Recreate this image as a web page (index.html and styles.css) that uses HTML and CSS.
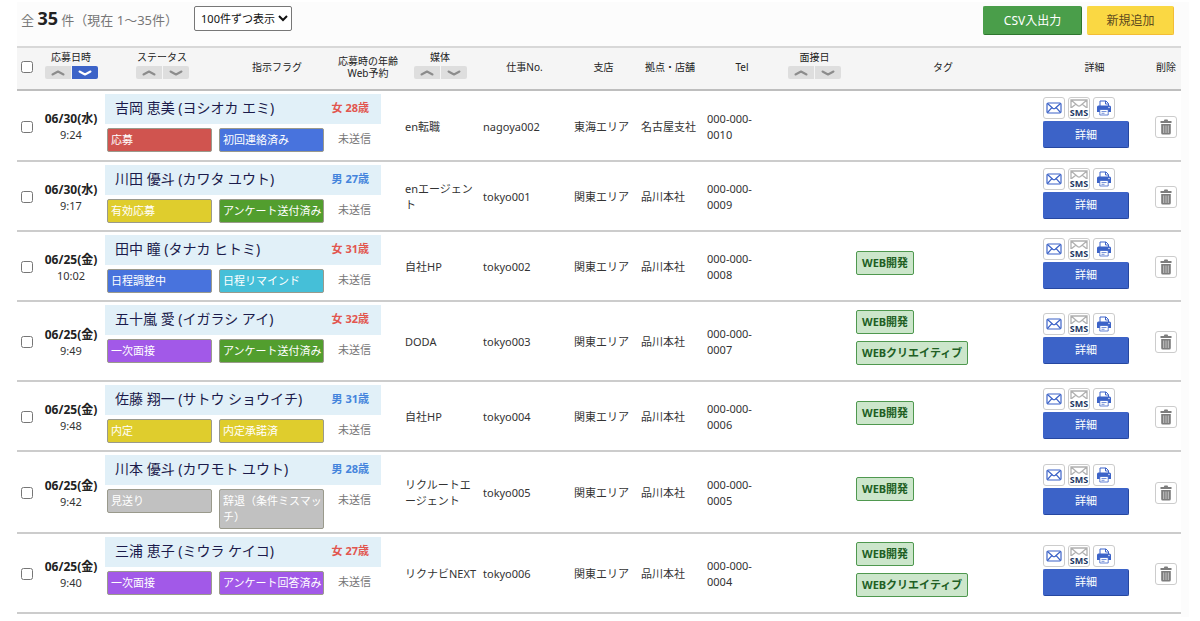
FILE: index.html
```html
<!DOCTYPE html>
<html lang="ja">
<head>
<meta charset="utf-8">
<title>応募者一覧</title>
<link rel="stylesheet" href="styles.css">
</head>
<body>
<svg class="sprite" aria-hidden="true">
  <symbol id="i-up" viewBox="0 0 14 8"><path d="M1.5 5.5 7 2.5l5.500 3" fill="none" stroke="currentColor" stroke-width="2" stroke-linecap="round" stroke-linejoin="round"/></symbol>
  <symbol id="i-down" viewBox="0 0 14 8"><path d="M1.500 2.500 7 5.500l5.500-3" fill="none" stroke="currentColor" stroke-width="2" stroke-linecap="round" stroke-linejoin="round"/></symbol>
  <symbol id="i-mail" viewBox="0 0 16 12"><g fill="none" stroke="currentColor" stroke-width="1.2" stroke-linejoin="round"><rect x="1" y="1" width="14" height="10" rx="1.200"/><path d="m1.500 1.500 5.300 4.800q1.200.9 2.400 0l5.300-4.800M1.500 10.500l4.300-4.800M14.500 10.500l-4.300-4.800"/></g></symbol>
  <symbol id="i-env" viewBox="0 0 18 9"><g fill="none" stroke="#b0b0b0" stroke-width="1.300"><path d="M1 9V1h16v8M1 1l6.500 5.500q1.500 1.200 3 0L17 1M1 9l5-4M17 9l-5-4"/></g></symbol>
  <symbol id="i-print" viewBox="0 0 16 16"><path d="M4 6V1h6l2.500 2.500V6" fill="#fff" stroke="currentColor" stroke-width="1"/><path d="M9.500 1v3h3" fill="none" stroke="currentColor"/><path d="M2.500 5.500h11a1.500 1.500 0 0 1 1.500 1.500v5H1V7a1.500 1.500 0 0 1 1.500-1.500Z" fill="currentColor"/><circle cx="13" cy="7.500" r=".7" fill="#fff"/><path d="M3.800 9.500h8.400V15H3.800Z" fill="#fff" stroke="currentColor" stroke-width=".8"/><path d="M5.500 11.500h5M5.500 13.300h3" stroke="currentColor" stroke-width=".7"/></symbol>
  <symbol id="i-trash" viewBox="0 0 12 16"><path d="M.5 2h3.300l.7-1.500h3L8.200 2h3.300v2H.5ZM1.200 5h9.600v9a1.500 1.500 0 0 1-1.500 1.500H2.700A1.500 1.500 0 0 1 1.200 14Z" fill="#7d7d7d"/><path d="M3.700 6.500V14M6 6.500V14M8.300 6.500V14" stroke="#c6c6c6" stroke-width="1"/></symbol>
</svg>
<main class="panel">
  <header class="toolbar">
    <p class="count">全 <strong>35</strong> 件（現在 1〜35件）</p>
    <select class="per-page" aria-label="表示件数"><option>100件ずつ表示</option></select>
    <div class="toolbar-actions">
      <button type="button" class="btn btn-csv">CSV入出力</button>
      <button type="button" class="btn btn-new">新規追加</button>
    </div>
  </header>
  <table class="list">
    <colgroup>
      <col class="c-check"><col class="c-date"><col class="c-status"><col class="c-flag"><col class="c-web"><col class="c-media"><col class="c-job"><col class="c-branch"><col class="c-store"><col class="c-tel"><col class="c-meet"><col class="c-tag"><col class="c-detail"><col class="c-del">
    </colgroup>
    <thead>
      <tr>
        <th class="check"><input type="checkbox" aria-label="すべて選択"></th>
        <th>応募日時<span class="sort"><button type="button" aria-label="昇順"><svg><use href="#i-up"/></svg></button><button type="button" class="on" aria-label="降順"><svg><use href="#i-down"/></svg></button></span></th>
        <th>ステータス<span class="sort"><button type="button" aria-label="昇順"><svg><use href="#i-up"/></svg></button><button type="button" aria-label="降順"><svg><use href="#i-down"/></svg></button></span></th>
        <th>指示フラグ</th>
        <th>応募時の年齢<br>Web予約</th>
        <th>媒体<span class="sort"><button type="button" aria-label="昇順"><svg><use href="#i-up"/></svg></button><button type="button" aria-label="降順"><svg><use href="#i-down"/></svg></button></span></th>
        <th>仕事No.</th>
        <th>支店</th>
        <th>拠点・店舗</th>
        <th>Tel</th>
        <th>面接日<span class="sort"><button type="button" aria-label="昇順"><svg><use href="#i-up"/></svg></button><button type="button" aria-label="降順"><svg><use href="#i-down"/></svg></button></span></th>
        <th>タグ</th>
        <th>詳細</th>
        <th>削除</th>
      </tr>
    </thead>
    <tbody id="rows"></tbody>
  </table>
</main>
<script src="script.js"></script>
</body>
</html>
```

FILE: styles.css
```css
* { box-sizing: border-box; }

body {
  margin: 0;
  padding: 2px 11px 4px 17px;
  height: 100vh;
  background: #fff;
  color: #333;
  font: 11px/16px "Noto Sans", "Noto Sans CJK JP", sans-serif;
}

button, select, input { font: inherit; margin: 0; }
button { padding: 0; cursor: pointer; }
svg { display: block; }
.sprite { display: none; }

.panel {
  height: 100%;
  padding-right: 8px;
  overflow: hidden;
  background: #fcfcfc;
}

.toolbar {
  display: flex;
  align-items: flex-start;
  gap: 16px;
  height: 44px;
  padding: 4px 7px 0 4px;
}
.count { margin: 0; color: #777; font-size: 13px; line-height: 24px; white-space: nowrap; }
.count strong { color: #222; font-size: 18px; }
.per-page {
  width: 98px;
  height: 25px;
  padding: 0 0 0 2px;
  border: 1px solid #777;
  border-radius: 2px;
  background: #fff;
  color: #111;
}
.toolbar-actions { display: flex; gap: 5px; margin-left: auto; }
.btn { height: 29px; border: 1px solid; border-radius: 2px; font-size: 12px; }
.btn-csv {
  width: 99px;
  background: #4a9e4a;
  border-color: #4a9e4a #2e762e #2e762e #4a9e4a;
  color: #fff;
}
.btn-new {
  width: 87px;
  background: #fad843;
  border-color: #fad843 #f3bd35 #f3bd35 #fad843;
  color: #5c4a1e;
}

.list { width: 100%; table-layout: fixed; border-collapse: separate; border-spacing: 0; }
.c-check { width: 20px; }
.c-date { width: 68px; }
.c-status { width: 114px; }
.c-flag { width: 116px; }
.c-web { width: 66px; }
.c-media { width: 78px; }
.c-job { width: 91px; }
.c-branch { width: 67px; }
.c-store { width: 66px; }
.c-tel { width: 78px; }
.c-meet { width: 67px; }
.c-detail { width: 113px; }
.c-del { width: 30px; }

th {
  height: 45px;
  padding: 0 0 3px;
  border-top: 2px solid #d8d8d8;
  border-bottom: 2px solid #bebebe;
  background: #f5f5f5;
  color: #222;
  font-size: 10px;
  font-weight: 400;
  line-height: 12px;
  white-space: nowrap;
}
.sort { display: flex; justify-content: center; gap: 1px; margin: 3px 0 4px; }
.sort button {
  display: grid;
  place-items: center;
  width: 26px;
  height: 13px;
  border: 0;
  border-radius: 2px 0 0 2px;
  background: #dedede;
  color: #8c8c8c;
}
.sort button + button { border-radius: 0 2px 2px 0; }
.sort .on { background: #3c63c8; color: #fff; }
.sort svg { width: 14px; height: 8px; }

td {
  height: 70px;
  padding: 2px 0 0 4px;
  border-bottom: 2px solid #ccc;
  background: #fff;
  vertical-align: middle;
}
tbody tr:first-child td { height: 71px; }
.check { padding-left: 4px; text-align: left; }
.check input { display: block; width: 12px; height: 12px; }
.date { padding: 3px 0 0; text-align: center; }
.date strong { display: block; color: #222; font-size: 12px; }
.tel { padding-right: 20px; }

.person { padding: 3px 20px 3px 0; vertical-align: top; }
.band {
  display: flex;
  align-items: center;
  justify-content: space-between;
  height: 30px;
  margin-bottom: 4px;
  padding: 0 12px 2px 10px;
  background: #e1f0f8;
}
.name { color: #1b1b4b; font-size: 14px; text-decoration: none; white-space: nowrap; }
.female { color: #e2564f; }
.male { color: #4484dc; }
.marks {
  display: grid;
  grid-template-columns: 105px 105px 1fr;
  align-items: start;
  column-gap: 7px;
  padding-left: 2px;
  color: #777;
}
.mark { padding: 3px 0 3px 3px; border: 1px solid #9a9a8c; border-radius: 2px; color: #fff; }
.red { background: #d0544f; }
.blue { background: #4873dd; }
.yellow { background: #dfcd2d; }
.green { background: #529e2e; }
.cyan { background: #45bfd8; }
.purple { background: #a259e8; }
.gray { background: #c1c1c1; }
.web { padding: 3px 0 0 7px; }

.tags { padding: 8px 0 8px 8px; }
.tag {
  display: block;
  width: fit-content;
  margin-bottom: 7px;
  padding: 3px 5px;
  border: 1px solid #4f984f;
  border-radius: 2px;
  background: #cce6cb;
  color: #215f24;
  font-weight: 700;
}

.detail { padding: 0 0 6px 5px; }
.icons { display: flex; gap: 3px; margin-bottom: 2px; }
.icon {
  display: grid;
  place-items: center;
  width: 22px;
  height: 22px;
  border: 1px solid #ccc;
  border-radius: 3px;
  background: #fff;
  color: #3c63c8;
}
.i-mail { width: 16px; height: 12px; }
.i-print { width: 16px; height: 16px; }
.i-trash { width: 12px; height: 16px; }
.i-env { width: 18px; height: 9px; }
.sms { align-content: center; color: #1f3864; font-size: 9px; line-height: 9px; font-weight: 700; }
.btn-detail {
  width: 86px;
  height: 27px;
  border: 1px solid #3c63c8;
  border-color: #3c63c8 #2647a0 #2647a0 #3c63c8;
  border-radius: 2px;
  background: #3c63c8;
  color: #fff;
}
```

FILE: script.js
```js
const rows = [
  ["06/30(水)", "9:24", "吉岡 恵美 (ヨシオカ エミ)", "女", 28, "red", "応募", "blue", "初回連絡済み", "en転職", "nagoya002", "東海エリア", "名古屋支社", "0010", []],
  ["06/30(水)", "9:17", "川田 優斗 (カワタ ユウト)", "男", 27, "yellow", "有効応募", "green", "アンケート送付済み", "enエージェント", "tokyo001", "関東エリア", "品川本社", "0009", []],
  ["06/25(金)", "10:02", "田中 瞳 (タナカ ヒトミ)", "女", 31, "blue", "日程調整中", "cyan", "日程リマインド", "自社HP", "tokyo002", "関東エリア", "品川本社", "0008", ["WEB開発"]],
  ["06/25(金)", "9:49", "五十嵐 愛 (イガラシ アイ)", "女", 32, "purple", "一次面接", "green", "アンケート送付済み", "DODA", "tokyo003", "関東エリア", "品川本社", "0007", ["WEB開発", "WEBクリエイティブ"]],
  ["06/25(金)", "9:48", "佐藤 翔一 (サトウ ショウイチ)", "男", 31, "yellow", "内定", "yellow", "内定承諾済", "自社HP", "tokyo004", "関東エリア", "品川本社", "0006", ["WEB開発"]],
  ["06/25(金)", "9:42", "川本 優斗 (カワモト ユウト)", "男", 28, "gray", "見送り", "gray", "辞退（条件ミスマッチ）", "リクルートエージェント", "tokyo005", "関東エリア", "品川本社", "0005", ["WEB開発"]],
  ["06/25(金)", "9:40", "三浦 恵子 (ミウラ ケイコ)", "女", 27, "purple", "一次面接", "purple", "アンケート回答済み", "リクナビNEXT", "tokyo006", "関東エリア", "品川本社", "0004", ["WEB開発", "WEBクリエイティブ"]],
];

const icon = (name) => `<svg class="i-${name}"><use href="#i-${name}"/></svg>`;

const rowHtml = ([date, time, name, sex, age, statusColor, status, flagColor, flag, media, job, branch, store, tel, tags]) => `
  <tr>
    <td class="check"><input type="checkbox" aria-label="${name}を選択"></td>
    <td class="date"><strong>${date}</strong>${time}</td>
    <td class="person" colspan="3">
      <div class="band"><a class="name" href="#">${name}</a><strong class="${sex === "女" ? "female" : "male"}">${sex} ${age}歳</strong></div>
      <div class="marks"><span class="mark ${statusColor}">${status}</span><span class="mark ${flagColor}">${flag}</span><span class="web">未送信</span></div>
    </td>
    <td>${media}</td>
    <td>${job}</td>
    <td>${branch}</td>
    <td>${store}</td>
    <td class="tel">000-000-${tel}</td>
    <td></td>
    <td class="tags">${tags.map((t) => `<span class="tag">${t}</span>`).join("")}</td>
    <td class="detail">
      <div class="icons">
        <button type="button" class="icon" aria-label="メール">${icon("mail")}</button>
        <button type="button" class="icon sms">${icon("env")}SMS</button>
        <button type="button" class="icon" aria-label="印刷">${icon("print")}</button>
      </div>
      <button type="button" class="btn-detail">詳細</button>
    </td>
    <td><button type="button" class="icon" aria-label="削除">${icon("trash")}</button></td>
  </tr>`;

const nextRow = `<tr><td></td><td></td><td class="person" colspan="3"><div class="band"></div></td><td colspan="9"></td></tr>`;

document.getElementById("rows").innerHTML = rows.map(rowHtml).join("") + nextRow;
```
